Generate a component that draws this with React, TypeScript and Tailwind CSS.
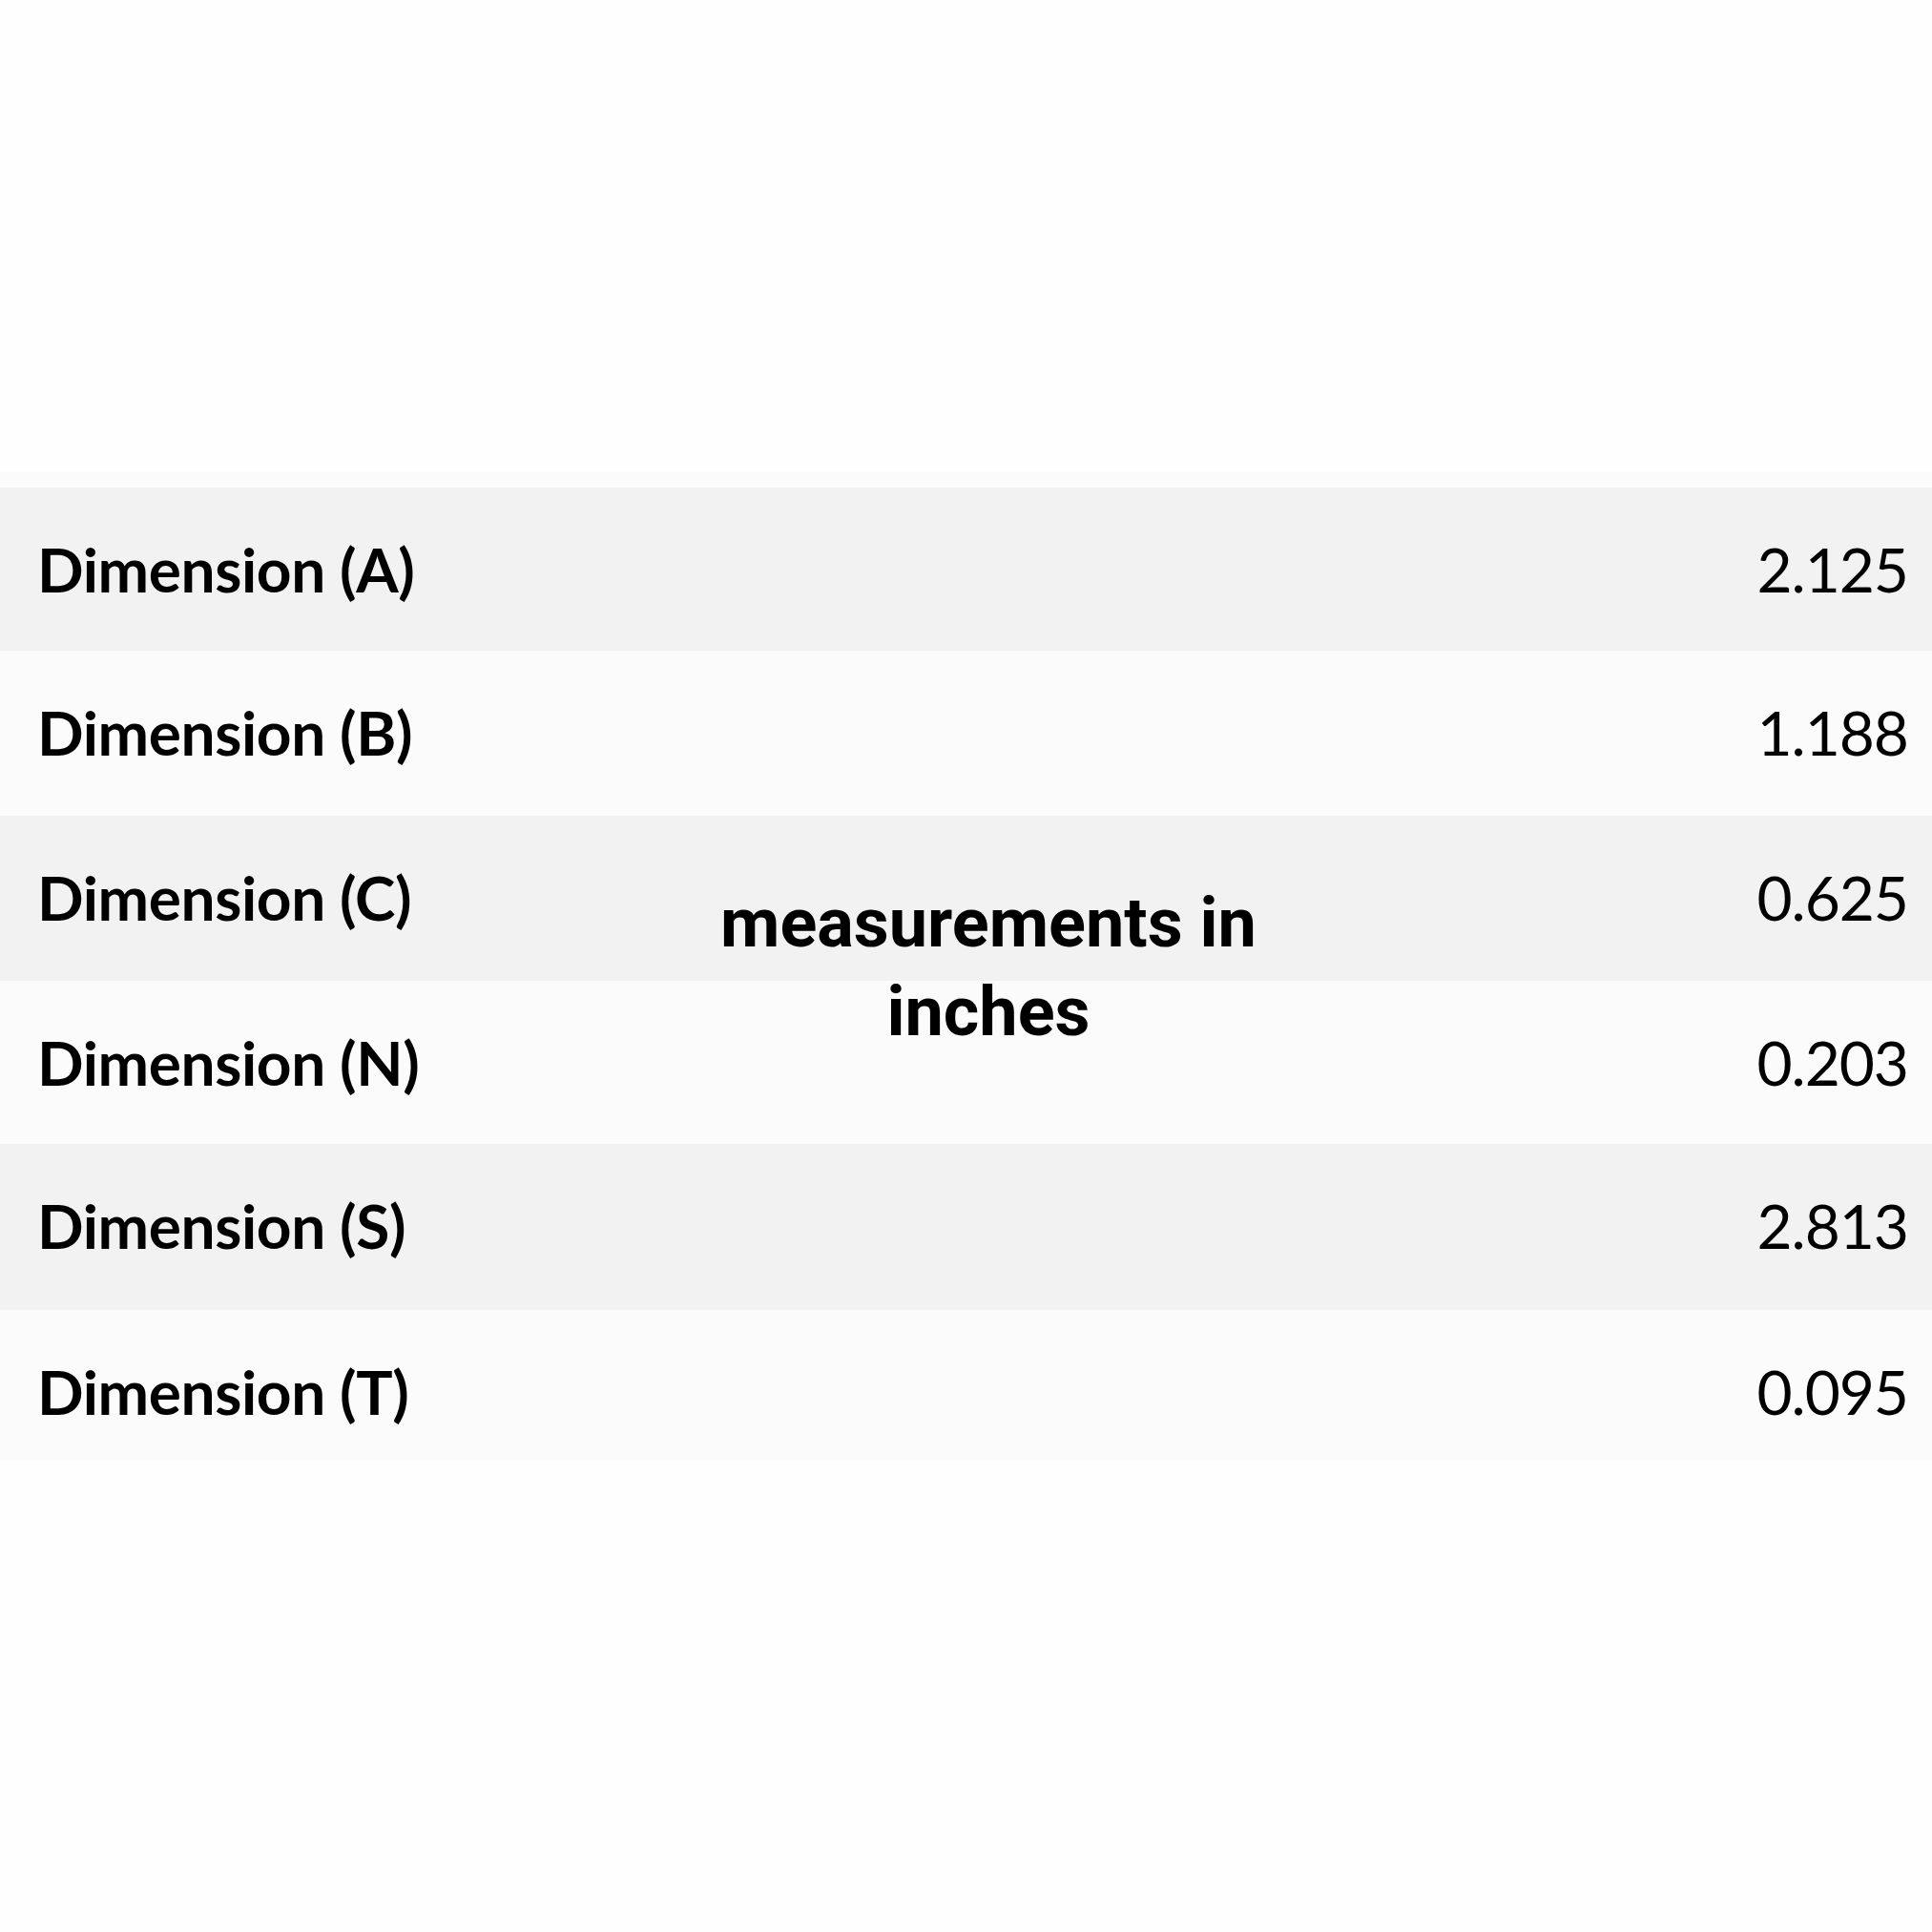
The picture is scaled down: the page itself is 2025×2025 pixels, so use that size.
import React from "react";

const rows = [
  { label: "Dimension (A)", value: "2.125" },
  { label: "Dimension (B)", value: "1.188" },
  { label: "Dimension (C)", value: "0.625" },
  { label: "Dimension (N)", value: "0.203" },
  { label: "Dimension (S)", value: "2.813" },
  { label: "Dimension (T)", value: "0.095" },
];

const heights = ["h-[171px]", "h-[173px]", "h-[173px]", "h-[171px]", "h-[174px]", "h-[157px]"];

const App: React.FC = () => {
  return (
    <div className="relative w-[2025px] h-[2025px] overflow-hidden bg-[#fefefe] font-['Lato',sans-serif] text-black">
      <div className="h-[495px]" />
      <div className="h-[16px] bg-[#fbfbfb]" />
      <div className="flex flex-col">
        {rows.map((r, i) => (
          <div
            key={r.label}
            className={`flex items-start justify-between pl-[39px] pr-[25px] pt-[47px] text-[64px] leading-[78px] ${heights[i]} ${
              i % 2 === 0 ? "bg-[#f2f2f2]" : "bg-[#fbfbfb]"
            }`}
          >
            <span className="font-bold tracking-[-0.4px]">{r.label}</span>
            <span className="font-normal tracking-[-1px]">{r.value}</span>
          </div>
        ))}
      </div>

      <div className="absolute left-[736px] top-[921px] w-[600px] text-center font-['Roboto',sans-serif] font-bold text-[72px] leading-[93px]">
        measurements in
        <br />
        inches
      </div>
    </div>
  );
};

export default App;
